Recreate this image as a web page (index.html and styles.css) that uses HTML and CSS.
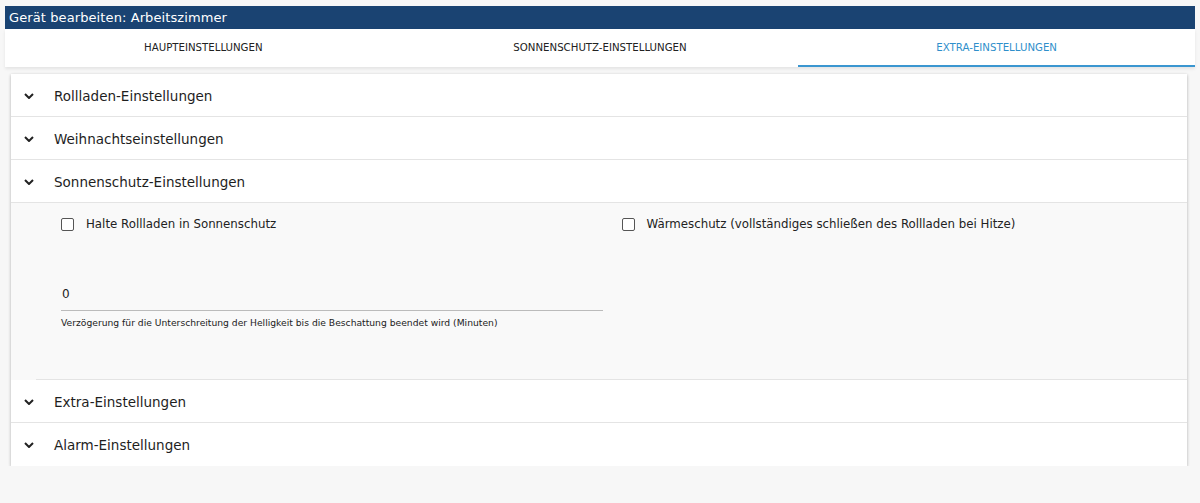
FILE: index.html
```html
<!DOCTYPE html>
<html lang="de">
<head>
  <meta charset="UTF-8" />
  <meta name="viewport" content="width=device-width, initial-scale=1.0"/>
  <title>Gerät bearbeiten</title>
  <link rel="stylesheet" href="styles.css">
</head>
<body>

  <div class="dialog-title">Gerät bearbeiten: Arbeitszimmer</div>

  <div class="tabs">
    <div class="tab">Haupteinstellungen</div>
    <div class="tab">Sonnenschutz-Einstellungen</div>
    <div class="tab active">Extra-Einstellungen</div>
  </div>

  <div class="panel">
    <div class="section-head">
      <svg class="chevron" viewBox="0 0 10 6"><path d="M1 1l4 4 4-4"/></svg>
      <span>Rollladen-Einstellungen</span>
    </div>
    <div class="section-head">
      <svg class="chevron" viewBox="0 0 10 6"><path d="M1 1l4 4 4-4"/></svg>
      <span>Weihnachtseinstellungen</span>
    </div>
    <div class="section-head">
      <svg class="chevron" viewBox="0 0 10 6"><path d="M1 1l4 4 4-4"/></svg>
      <span>Sonnenschutz-Einstellungen</span>
    </div>

    <div class="section-body">
      <div class="fields">
        <label class="check">
          <span class="box"></span>
          Halte Rollladen in Sonnenschutz
        </label>
        <label class="check">
          <span class="box"></span>
          Wärmeschutz (vollständiges schließen des Rollladen bei Hitze)
        </label>
        <div class="text-field">
          <div class="value">0</div>
          <div class="helper">Verzögerung für die Unterschreitung der Helligkeit bis die Beschattung beendet wird (Minuten)</div>
        </div>
      </div>
      <div class="body-rule"></div>
    </div>

    <div class="section-head">
      <svg class="chevron" viewBox="0 0 10 6"><path d="M1 1l4 4 4-4"/></svg>
      <span>Extra-Einstellungen</span>
    </div>
    <div class="section-head last">
      <svg class="chevron" viewBox="0 0 10 6"><path d="M1 1l4 4 4-4"/></svg>
      <span>Alarm-Einstellungen</span>
    </div>
  </div>

</body>
</html>
```

FILE: styles.css
```css
body {
  margin: 0;
  padding: 6px 5px 0;
  background: #f7f7f7;
  font-family: 'DejaVu Sans', sans-serif;
  color: #222;
}

.dialog-title {
  height: 23px;
  line-height: 23px;
  padding-left: 4px;
  background: #1a4372;
  color: #fff;
  font-size: 13px;
  letter-spacing: 0.1px;
}

.tabs {
  display: grid;
  grid-template-columns: 1fr 1fr 1fr;
  background: #fff;
  height: 38px;
  box-shadow: 0 2px 3px rgba(0, 0, 0, 0.08);
}

.tab {
  display: flex;
  align-items: center;
  justify-content: center;
  font-size: 10.2px;
  text-transform: uppercase;
  color: #222;
  border-bottom: 2px solid transparent;
}

.tab.active {
  color: #2f8fcb;
  border-bottom-color: #3a96d0;
}

.panel {
  margin: 7px 8px 0 6px;
  background: #fff;
  box-shadow: 0 1px 3px rgba(0, 0, 0, 0.3);
}

.section-head {
  display: flex;
  align-items: center;
  box-sizing: border-box;
  height: 43px;
  padding-top: 1px;
  border-bottom: 1px solid #e4e4e4;
  font-size: 13.5px;
  color: #1e1e1e;
}

.section-head.last {
  border-bottom: none;
}

.chevron {
  width: 10px;
  height: 6px;
  margin: 0 20px 0 13px;
  fill: none;
  stroke: #222;
  stroke-width: 2;
}

.section-body {
  background: #f9f9f9;
}

.fields {
  display: grid;
  grid-template-columns: 1fr 1fr;
  column-gap: 19px;
  padding: 14px 24px 0 50px;
  height: 162px;
  align-content: start;
}

.check {
  display: flex;
  align-items: center;
  gap: 12px;
  height: 14px;
  font-size: 11.8px;
  color: #222;
}

.box {
  width: 11px;
  height: 11px;
  border: 1.5px solid #555;
  border-radius: 2px;
  background: #fff;
}

.text-field {
  margin-top: 56px;
}

.value {
  font-size: 12px;
  padding: 0 1px 9px;
  border-bottom: 1px solid #bbb;
}

.helper {
  font-size: 9.2px;
  margin-top: 6px;
  color: #222;
}

.body-rule {
  margin-left: 25px;
  border-top: 1px solid #e4e4e4;
}
```
